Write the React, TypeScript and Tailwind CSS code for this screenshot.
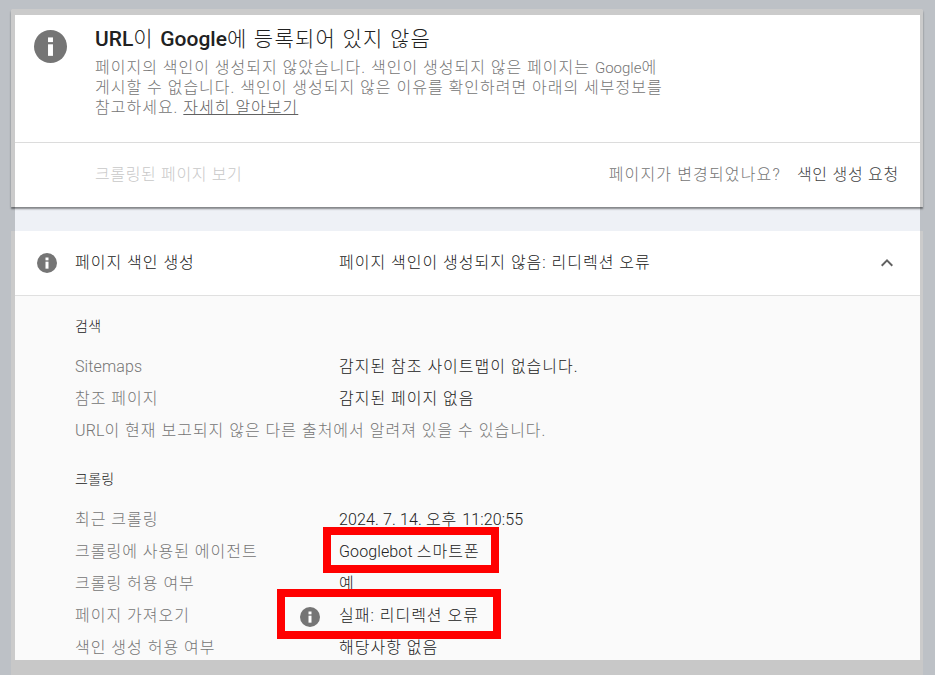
import type { ReactNode } from 'react';

const font = "font-['Roboto','Noto_Sans_CJK_KR',sans-serif]";

function InfoIcon({ className }: { className: string }) {
  return (
    <svg viewBox="0 0 24 24" className={className}>
      <circle cx="12" cy="12" r="12" fill="#757575" />
      <rect x="10.2" y="10.4" width="3.6" height="8.4" fill="#fff" />
      <rect x="10.2" y="5.4" width="3.6" height="3.4" fill="#fff" />
    </svg>
  );
}

// latin runs keep their natural spacing, hangul is tracked out
function L({ children }: { children: ReactNode }) {
  return <span className="font-[350] tracking-[0.12px]">{children}</span>;
}

function Row({ label, value, icon }: { label: ReactNode; value: ReactNode; icon?: boolean }) {
  return (
    <div className="flex h-8 items-center">
      <div className="w-[264px] text-[#757575]">{label}</div>
      <div className="relative text-[#212121]">
        {icon && <InfoIcon className="absolute top-[3px] -left-[39px] h-[20px] w-[20px]" />}
        {value}
      </div>
    </div>
  );
}

export default function App() {
  return (
    <div className={`${font} relative h-[675px] w-[935px] overflow-hidden bg-[#bdc1c6] pt-[9px] pl-[11px] text-[16px] font-light tracking-[1px] whitespace-nowrap`}>
      <div className="flex h-[666px] w-[912px] flex-col">
        {/* Top status card */}
        <div className="relative z-10 h-[198px] shrink-0 rounded-t-[2px] border-x-[4px] border-t-[6px] border-r-[3px] border-[#cbcbcb] bg-white shadow-[0_2px_2px_rgba(0,0,0,0.45)]">
          <div className="flex h-[128px] border-b border-[#dcdcdc]">
            <div className="w-[80px] pt-[15px] pl-[19px]">
              <InfoIcon className="h-[33px] w-[33px]" />
            </div>
            <div className="pt-[8px]">
              <h1 className="text-[21px] leading-[32px] tracking-[1.25px] text-[#212121]">
                <span className="font-medium tracking-normal">URL</span>이 <span className="font-medium tracking-normal">Google</span>에 등록되어 있지 않음
              </h1>
              <p className="mt-[3px] leading-[20px] text-[#757575]">
                페이지의 색인이 생성되지 않았습니다. 색인이 생성되지 않은 페이지는 <span className="text-[15px] font-[350] tracking-normal">Google</span>에
                <br />
                게시할 수 없습니다. 색인이 생성되지 않은 이유를 확인하려면 아래의 세부정보를
                <br />
                참고하세요. <span className="text-[#616161] underline">자세히 알아보기</span>
              </p>
            </div>
          </div>
          <div className="flex h-[63px] items-center justify-between pr-[21px] pl-[80px]">
            <span className="tracking-[0.65px] text-[#c8c8c8]">크롤링된 페이지 보기</span>
            <div className="flex gap-[16px]">
              <span className="tracking-[1.15px] text-[#757575]">페이지가 변경되었나요?</span>
              <span className="tracking-[0.75px] text-[#424242]">색인 생성 요청</span>
            </div>
          </div>
        </div>

        <div className="mr-[3px] ml-[4px] h-[24px] shrink-0 bg-[#eef1f6]" />

        {/* Page indexing card */}
        <div className="flex h-[429px] shrink-0 flex-col border-x-[4px] border-r-[3px] border-[#cbcbcb] bg-white">
          <div className="flex h-[65px] shrink-0 items-center border-b border-[#e0e0e0] text-[#212121]">
            <div className="w-[60px] pl-[22px]">
              <InfoIcon className="h-[20px] w-[20px]" />
            </div>
            <div className="w-[264px]">페이지 색인 생성</div>
            <div className="flex-1">페이지 색인이 생성되지 않음: 리디렉션 오류</div>
            <svg viewBox="0 0 24 24" className="mr-[21px] h-[24px] w-[24px]" fill="#616161">
              <path d="M12 8l-6 6 1.41 1.41L12 10.83l4.59 4.58L18 14z" />
            </svg>
          </div>
          <div className="flex-1 overflow-hidden bg-[#fafafa] pt-[15px] pl-[60px]">
            <div className="text-[14px] leading-[30px] tracking-[0.3px] text-[#212121]">검색</div>
            <div className="mt-[10px]">
              <Row label={<L>Sitemaps</L>} value="감지된 참조 사이트맵이 없습니다." />
              <Row label="참조 페이지" value="감지된 페이지 없음" />
              <div className="flex h-8 items-center text-[#757575]">
                <span><L>URL</L>이 현재 보고되지 않은 다른 출처에서 알려져 있을 수 있습니다.</span>
              </div>
            </div>
            <div className="mt-[17px] text-[14px] leading-[30px] tracking-[0.3px] text-[#212121]">크롤링</div>
            <div className="mt-[10px]">
              <Row label="최근 크롤링" value={<><L>2024. 7. 14. </L>오후 <L>11:20:55</L></>} />
              <Row label="크롤링에 사용된 에이전트" value={<><L>Googlebot </L>스마트폰</>} />
              <Row label="크롤링 허용 여부" value="예" />
              <Row label="페이지 가져오기" value="실패: 리디렉션 오류" icon />
              <Row label="색인 생성 허용 여부" value="해당사항 없음" />
            </div>
          </div>
        </div>

        <div className="flex-1 bg-[#c8c8c8]" />
      </div>

      {/* Red annotation boxes drawn over the screenshot */}
      <div className="absolute top-[527px] left-[323px] h-[46px] w-[176px] border-[8px] border-[#ff0000]" />
      <div className="absolute top-[589px] left-[277px] h-[50px] w-[224px] border-[8px] border-[#ff0000]" />
    </div>
  );
}
